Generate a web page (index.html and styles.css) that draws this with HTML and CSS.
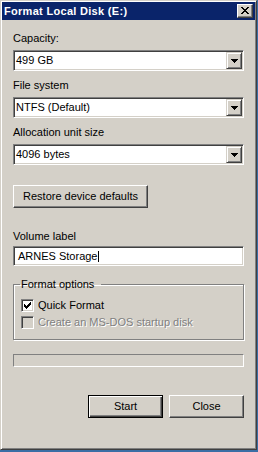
FILE: index.html
```html
<!DOCTYPE html>
<html lang="en">
<head>
    <meta charset="UTF-8">
    <title>Format Local Disk (E:)</title>
    <link rel="stylesheet" href="styles.css">
</head>
<body>

    <div class="window">
        <div class="titlebar">
            <span class="title">Format Local Disk (E:)</span>
            <span class="title-btn">
                <svg width="8" height="7" viewBox="0 0 8 7" shape-rendering="crispEdges">
                    <path d="M0 0h2v1H0zM6 0h2v1H6zM1 1h2v1H1zM5 1h2v1H5zM2 2h4v1H2zM3 3h2v1H3zM2 4h4v1H2zM1 5h2v1H1zM5 5h2v1H5zM0 6h2v1H0zM6 6h2v1H6z" fill="#000"/>
                </svg>
            </span>
        </div>

        <div class="content">
            <div class="label">Capacity:</div>
            <div class="combo">
                <span class="combo-text">499 GB</span>
                <span class="combo-btn">
                    <svg width="7" height="4" viewBox="0 0 7 4" shape-rendering="crispEdges"><path d="M0 0h7v1H0zM1 1h5v1H1zM2 2h3v1H2zM3 3h1v1H3z" fill="#000"/></svg>
                </span>
            </div>

            <div class="label spaced">File system</div>
            <div class="combo">
                <span class="combo-text">NTFS (Default)</span>
                <span class="combo-btn">
                    <svg width="7" height="4" viewBox="0 0 7 4" shape-rendering="crispEdges"><path d="M0 0h7v1H0zM1 1h5v1H1zM2 2h3v1H2zM3 3h1v1H3z" fill="#000"/></svg>
                </span>
            </div>

            <div class="label spaced">Allocation unit size</div>
            <div class="combo">
                <span class="combo-text">4096 bytes</span>
                <span class="combo-btn">
                    <svg width="7" height="4" viewBox="0 0 7 4" shape-rendering="crispEdges"><path d="M0 0h7v1H0zM1 1h5v1H1zM2 2h3v1H2zM3 3h1v1H3z" fill="#000"/></svg>
                </span>
            </div>

            <div class="btn restore">Restore device defaults</div>

            <div class="label volume">Volume label</div>
            <div class="edit">ARNES Storage<span class="caret"></span></div>

            <fieldset class="group">
                <legend>Format options</legend>
                <div class="check-row">
                    <span class="checkbox">
                        <svg width="7" height="7" viewBox="0 0 7 7" shape-rendering="crispEdges"><path d="M6 0h1v1H6zM5 1h2v1H5zM0 2h1v1H0zM4 2h3v1H4zM0 3h2v1H0zM3 3h3v1H3zM0 4h5v1H0zM1 5h3v1H1zM2 6h1v1H2z" fill="#000"/></svg>
                    </span>
                    Quick Format
                </div>
                <div class="check-row disabled">
                    <span class="checkbox"></span>
                    Create an MS-DOS startup disk
                </div>
            </fieldset>

            <div class="progress"></div>

            <div class="actions">
                <div class="btn default">Start</div>
                <div class="btn">Close</div>
            </div>
        </div>
    </div>

</body>
</html>
```

FILE: styles.css
```css
* {
    margin: 0;
    padding: 0;
    box-sizing: border-box;
}

body {
    background-color: #3a6ea5;
    font-family: 'Liberation Sans', Arial, sans-serif;
    font-size: 11px;
    color: #000;
}

/* Fenetre classique */
.window {
    width: 257px;
    height: 450px;
    background-color: #d4d0c8;
    border: 1px solid;
    border-color: #d4d0c8 #404040 #404040 #d4d0c8;
    box-shadow: inset 1px 1px #fff, inset -1px -1px #808080;
    padding: 1px;
}

.titlebar {
    height: 18px;
    background-color: #0a246a;
    display: flex;
    align-items: center;
    justify-content: space-between;
    padding: 0 2px 0 2px;
}

.title {
    color: #fff;
    font-weight: bold;
    line-height: 13px;
    letter-spacing: 0.3px;
}

.title-btn {
    width: 16px;
    height: 14px;
    background-color: #d4d0c8;
    border: 1px solid;
    border-color: #fff #404040 #404040 #fff;
    box-shadow: inset -1px -1px #808080;
    display: flex;
    align-items: center;
    justify-content: center;
    padding: 0 1px 1px 0;
}

.content {
    padding: 12px 11px 0 11px;
}

.label {
    line-height: 13px;
}

.label.spaced {
    margin-top: 8px;
}

.label.volume {
    margin-top: 22px;
}

/* Champs creux */
.combo,
.edit {
    background-color: #fff;
    border: 1px solid;
    border-color: #808080 #fff #fff #808080;
    box-shadow: inset 1px 1px #404040, inset -1px -1px #d4d0c8;
}

.combo {
    margin-top: 5px;
    height: 21px;
    padding: 1px;
    display: flex;
    align-items: center;
}

.combo-text {
    flex: 1;
    padding-left: 1px;
    line-height: 13px;
}

.combo-btn {
    width: 16px;
    height: 17px;
    background-color: #d4d0c8;
    border: 1px solid;
    border-color: #d4d0c8 #404040 #404040 #d4d0c8;
    box-shadow: inset 1px 1px #fff, inset -1px -1px #808080;
    display: flex;
    align-items: center;
    justify-content: center;
}

.edit {
    margin-top: 3px;
    height: 20px;
    padding: 0 4px;
    display: flex;
    align-items: center;
    line-height: 13px;
}

.caret {
    display: inline-block;
    width: 1px;
    height: 11px;
    background-color: #000;
    margin-left: 1px;
}

/* Boutons */
.btn {
    height: 23px;
    background-color: #d4d0c8;
    border: 1px solid;
    border-color: #fff #404040 #404040 #fff;
    box-shadow: inset -1px -1px #808080;
    display: flex;
    align-items: center;
    justify-content: center;
    line-height: 13px;
    width: 75px;
}

.btn.restore {
    width: 135px;
    margin-top: 20px;
}

.btn.default {
    border-color: #000;
    box-shadow: inset 1px 1px #fff, inset -1px -1px #404040, inset -2px -2px #808080;
}

/* Groupe */
.group {
    margin-top: 12px;
    border: 1px solid #808080;
    box-shadow: inset 1px 1px #fff, 1px 1px #fff;
    padding: 6px 7px 8px 7px;
    min-width: 0;
}

.group legend {
    line-height: 13px;
    padding: 0 7px 0 1px;
    margin-left: -1px;
}

.check-row {
    height: 17px;
    display: flex;
    align-items: center;
    line-height: 13px;
}

.checkbox {
    width: 13px;
    height: 13px;
    margin-right: 4px;
    background-color: #fff;
    border: 1px solid;
    border-color: #808080 #fff #fff #808080;
    box-shadow: inset 1px 1px #404040, inset -1px -1px #d4d0c8;
    display: flex;
    align-items: center;
    justify-content: center;
}

.check-row.disabled {
    color: #808080;
    text-shadow: 1px 1px 0 #fff;
}

.check-row.disabled .checkbox {
    background-color: #d4d0c8;
}

.progress {
    margin-top: 14px;
    height: 13px;
    border: 1px solid;
    border-color: #808080 #fff #fff #808080;
}

.actions {
    margin-top: 28px;
    display: flex;
    justify-content: flex-end;
    gap: 6px;
}
```
